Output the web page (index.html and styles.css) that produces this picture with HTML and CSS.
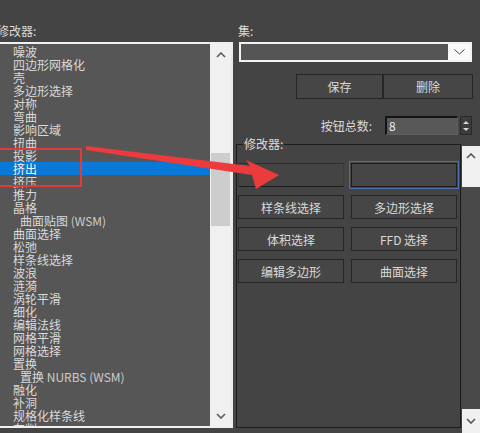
FILE: index.html
```html
<!DOCTYPE html>
<html lang="zh-CN">
<head>
<meta charset="utf-8">
<title>修改器集</title>
<link rel="stylesheet" href="styles.css">
</head>
<body>
<div class="app">
  <div class="left">
    <div class="lbl lbl-mod">修改器:</div>
    <div class="listbox">
      <div class="items">
        <div class="item">噪波</div>
        <div class="item">四边形网格化</div>
        <div class="item">壳</div>
        <div class="item">多边形选择</div>
        <div class="item">对称</div>
        <div class="item">弯曲</div>
        <div class="item">影响区域</div>
        <div class="item">扭曲</div>
        <div class="item">投影</div>
        <div class="item sel">挤出</div>
        <div class="item">挤压</div>
        <div class="item">推力</div>
        <div class="item">晶格</div>
        <div class="item sub">曲面贴图 <span class="lat">(WSM)</span></div>
        <div class="item">曲面选择</div>
        <div class="item">松弛</div>
        <div class="item">样条线选择</div>
        <div class="item">波浪</div>
        <div class="item">涟漪</div>
        <div class="item">涡轮平滑</div>
        <div class="item">细化</div>
        <div class="item">编辑法线</div>
        <div class="item">网格平滑</div>
        <div class="item">网格选择</div>
        <div class="item">置换</div>
        <div class="item sub">置换 <span class="lat">NURBS (WSM)</span></div>
        <div class="item">融化</div>
        <div class="item">补洞</div>
        <div class="item">规格化样条线</div>
        <div class="item">车削</div>
      </div>
      <div class="vscroll">
        <div class="sb-btn">
          <svg width="10" height="6" viewBox="0 0 10 6"><polyline points="1,5 5,1 9,5" fill="none" stroke="#5a5a5a" stroke-width="1.6"/></svg>
        </div>
        <div class="track"><div class="thumb"></div></div>
        <div class="sb-btn">
          <svg width="10" height="6" viewBox="0 0 10 6"><polyline points="1,1 5,5 9,1" fill="none" stroke="#5a5a5a" stroke-width="1.6"/></svg>
        </div>
      </div>
    </div>
  </div>

  <div class="right">
    <div class="lbl">集:</div>
    <div class="combo">
      <div class="combo-field"></div>
      <div class="combo-btn">
        <svg width="11" height="6" viewBox="0 0 11 6"><polyline points="0.5,0.5 5.5,5 10.5,0.5" fill="none" stroke="#444" stroke-width="1"/></svg>
      </div>
    </div>
    <div class="btnrow">
      <button class="btn btn-save">保存</button>
      <button class="btn btn-del">删除</button>
    </div>
    <div class="countrow">
      <span class="count-lbl">按钮总数:</span>
      <div class="spin-field">8</div>
      <div class="spin-btns">
        <svg width="8" height="14" viewBox="0 0 8 14"><polygon points="1,5 4,2 7,5" fill="#d8d8d8"/><polygon points="1,9 4,12 7,9" fill="#d8d8d8"/></svg>
      </div>
    </div>
    <div class="groupwrap">
      <fieldset class="group">
        <legend>修改器:</legend>
        <div class="grid">
          <button class="btn gbtn first"></button>
          <button class="btn gbtn focus"></button>
          <button class="btn gbtn">样条线选择</button>
          <button class="btn gbtn">多边形选择</button>
          <button class="btn gbtn">体积选择</button>
          <button class="btn gbtn">FFD 选择</button>
          <button class="btn gbtn">编辑多边形</button>
          <button class="btn gbtn">曲面选择</button>
        </div>
      </fieldset>
      <div class="vscroll2">
        <div class="sb2-btn">
          <svg width="10" height="6" viewBox="0 0 10 6"><polyline points="1,5 5,1 9,5" fill="none" stroke="#555" stroke-width="1.6"/></svg>
        </div>
        <div class="sb2-light"></div>
        <div class="sb2-track"></div>
        <div class="sb2-btn down">
          <svg width="10" height="6" viewBox="0 0 10 6"><polyline points="1,1 5,5 9,1" fill="none" stroke="#555" stroke-width="1.6"/></svg>
        </div>
      </div>
    </div>
  </div>
</div>

<svg class="annot" width="480" height="433" viewBox="0 0 480 433">
  <rect x="-4" y="149" width="85" height="37" fill="none" stroke="#e2393b" stroke-width="2"/>
  <polygon points="86,146 250,166 246,160 279,175 256,189 252,175 86,150" fill="#ec3b3d"/>
</svg>
</body>
</html>
```

FILE: styles.css
```css
* {
  box-sizing: border-box;
  margin: 0;
  padding: 0;
}

html,
body {
  width: 480px;
  height: 433px;
  overflow: hidden;
}

body {
  background: #444444;
  font-family: "Noto Sans CJK SC", "Noto Sans", sans-serif;
  font-size: 12px;
  color: #dadada;
  position: relative;
}

.app {
  display: flex;
  height: 433px;
}

.left {
  width: 233px;
  flex: none;
  padding-top: 22px;
}

.lbl {
  height: 18px;
  line-height: 18px;
  margin-bottom: 2px;
  white-space: nowrap;
}

.lbl-mod {
  margin-left: -3px;
}

.listbox {
  display: flex;
  height: 386px;
  background: #565656;
  border-top: 2px solid #f0f0f0;
  border-bottom: 2px solid #f0f0f0;
  border-right: 2px solid #ececec;
  overflow: hidden;
}

.items {
  flex: 1;
  padding-top: 1px;
  overflow: hidden;
}

.item {
  height: 13px;
  line-height: 13px;
  padding-left: 13px;
  white-space: nowrap;
}

.item.sub {
  padding-left: 20px;
}

.item .lat {
  color: #cccccc;
}

.item.sel {
  background: #0a78d7;
  color: #f4f4f4;
}

.vscroll {
  width: 21px;
  flex: none;
  background: #f0f0f0;
  display: flex;
  flex-direction: column;
}

.sb-btn {
  height: 21px;
  flex: none;
  display: flex;
  align-items: center;
  justify-content: center;
}

.track {
  flex: 1;
  padding-top: 88px;
}

.thumb {
  width: 19px;
  margin-left: 1px;
  height: 73px;
  background: #cdcdcd;
}

/* right column */
.right {
  flex: 1;
  padding: 22px 8px 0 5px;
  display: flex;
  flex-direction: column;
}

.combo {
  margin-left: 1px;
  height: 20px;
  display: flex;
  border: 2px solid #f2f2f2;
  background: #555555;
}

.combo-field {
  flex: 1;
}

.combo-btn {
  width: 22px;
  background: #fafafa;
  display: flex;
  align-items: center;
  justify-content: center;
}

.btnrow {
  margin-top: 12px;
  margin-right: -1px;
  display: flex;
  justify-content: flex-end;
}

.btn {
  height: 25px;
  background: #464646;
  border: 1px solid #262626;
  color: #dadada;
  font-family: inherit;
  font-size: 12px;
}

.btn-save {
  width: 87px;
}

.btn-del {
  width: 90px;
}

.countrow {
  margin-top: 17px;
  height: 19px;
  display: flex;
  justify-content: flex-end;
  align-items: center;
}

.count-lbl {
  margin-right: 13px;
}

.spin-field {
  width: 73px;
  height: 19px;
  background: #585858;
  border-top: 2px solid #141414;
  border-left: 2px solid #141414;
  border-right: 1px solid #5e5e5e;
  border-bottom: 1px solid #5e5e5e;
  padding-left: 2px;
  line-height: 16px;
  color: #eeeeee;
}

.spin-btns {
  width: 12px;
  height: 19px;
  margin-left: 2px;
  background: #3c3c3c;
  border: 1px solid #2a2a2a;
  display: flex;
  align-items: center;
  justify-content: center;
}

.groupwrap {
  margin: 2px -8px 0 -2px;
  display: flex;
  gap: 1px;
  flex: 1;
}

.group {
  width: 225px;
  height: 291px;
  flex: none;
  border: 1px solid #1c1c1c;
  padding: 12px 2px 0 1px;
}

.group legend {
  margin-left: 5px;
  padding: 0 1px;
  line-height: 14px;
  height: 14px;
  color: #dadada;
}

.grid {
  display: grid;
  grid-template-columns: 106px 106px;
  grid-auto-rows: 24px;
  column-gap: 7px;
  row-gap: 8px;
}

.gbtn {
  height: 24px;
  width: 106px;
}

.gbtn.first {
  background: #444444;
  border-color: #2e2e2e #3a3a3a #1e1e1e #3a3a3a;
}

.gbtn.focus {
  border-color: #1e1e1e;
  outline: 1px solid #4c70ab;
  outline-offset: 1px;
}

.vscroll2 {
  width: 18px;
  flex: none;
  margin-top: 9px;
  display: flex;
  flex-direction: column;
}

.sb2-btn {
  height: 20px;
  flex: none;
  background: #f0f0f0;
  display: flex;
  align-items: center;
  justify-content: center;
}

.sb2-btn.down {
  height: 24px;
}

.sb2-light {
  height: 21px;
  background: #f0f0f0;
}

.sb2-track {
  flex: 1;
  background: #494949;
}

.annot {
  position: absolute;
  left: 0;
  top: 0;
  pointer-events: none;
}
```
